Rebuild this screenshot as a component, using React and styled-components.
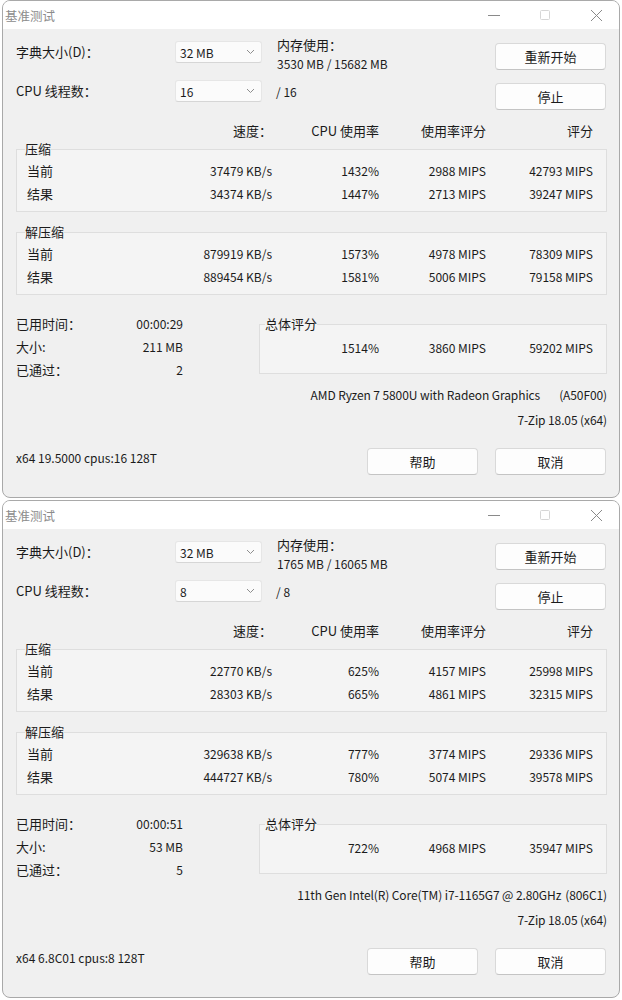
import React from "react";
import styled, { createGlobalStyle } from "styled-components";

const Global = createGlobalStyle`
  html, body { margin: 0; padding: 0; background: #ffffff; }
  body {
    font-family: "Noto Sans CJK SC", "Noto Sans", sans-serif;
    color: #1b1b1b;
    -webkit-font-smoothing: antialiased;
  }
`;

const Page = styled.div`
  display: flex;
  flex-direction: column;
  gap: 2px;
  padding-left: 2px;
`;

const Window = styled.section`
  width: 618px;
  height: 498px;
  box-sizing: border-box;
  border: 1px solid #a9a9a9;
  border-radius: 8px;
  overflow: hidden;
  background: #f0f0f0;
  display: flex;
  flex-direction: column;
`;

const TitleBar = styled.header`
  height: 28px;
  flex: none;
  background: #ffffff;
  display: flex;
  align-items: center;
  padding-left: 2px;
`;

const Title = styled.span`
  font-size: 12.5px;
  color: #8c8c8c;
`;

const Controls = styled.div`
  margin-left: auto;
  display: flex;
  gap: 5px;
  height: 100%;
`;

const Control = styled.div`
  width: 46px;
  height: 100%;
  display: flex;
  align-items: center;
  justify-content: center;
`;

const Body = styled.div`
  padding: 12px 12px 0 13px;
  font-size: 12px;
`;

const TopGrid = styled.div`
  display: grid;
  grid-template-columns: 159px 87px 1fr 111px;
  grid-template-rows: 39px 30px;
  align-items: start;
  padding-right: 1px;
`;

const Label = styled.div`
  font-size: 13px;
  line-height: 22px;
  white-space: nowrap;
`;

const Select = styled.div`
  height: 22px;
  box-sizing: border-box;
  background: #fbfbfb;
  border: 1px solid #e6e6e6;
  border-bottom-color: #d6d6d6;
  border-radius: 3px;
  display: flex;
  align-items: center;
  justify-content: space-between;
  padding: 0 6px 0 4px;
  font-size: 12px;
`;

const Memory = styled.div`
  margin-top: -6px;
  padding-left: 15px;
  line-height: 19px;
  font-size: 12px;
  white-space: nowrap;
  & > div:first-child { font-size: 13px; }
`;

const Threads = styled.div`
  padding-left: 14px;
  margin-top: 1px;
  line-height: 22px;
  font-size: 12px;
`;

const Button = styled.div`
  height: 27px;
  box-sizing: border-box;
  width: 111px;
  margin-top: ${(p) => p.$top || 0}px;
  background: #fdfdfd;
  border: 1px solid #d9d9d9;
  border-bottom-color: #c4c4c4;
  border-radius: 4px;
  display: flex;
  align-items: center;
  justify-content: center;
  font-size: 13px;
  color: #1b1b1b;
`;

const ColGrid = styled.div`
  display: grid;
  grid-template-columns: 1fr 107px 107px 107px 107px;
  text-align: right;
  white-space: nowrap;
  & > :first-child { text-align: left; }
`;

const HeaderRow = styled(ColGrid)`
  margin-top: 11px;
  padding: 0 14px 0 11px;
  line-height: 20px;
  font-size: 13px;
`;

const Group = styled.fieldset`
  margin: ${(p) => p.$top || 0}px 0 0 0;
  padding: 2px 13px 6px 10px;
  border: 1px solid #dedede;
  background: #f4f4f4;
  min-width: 0;
`;

const Legend = styled.legend`
  padding: 0;
  margin-left: -2px;
  line-height: 16px;
  font-size: 13px;
`;

const DataRow = styled(ColGrid)`
  line-height: 23px;
  font-size: 12px;
  & > :first-child { font-size: 13px; }
`;

const BottomGrid = styled.div`
  margin-top: 17px;
  display: grid;
  grid-template-columns: 167px 76px 1fr;
  align-items: start;
`;

const Stats = styled.div`
  display: grid;
  grid-template-columns: 1fr auto;
  line-height: 23px;
  font-size: 12px;
  & > :nth-child(odd) { font-size: 13px; }
  & > :nth-child(even) { text-align: right; }
`;

const TotalGroup = styled.fieldset`
  grid-column: 3;
  margin: 4px 0 0 0;
  padding: 4px 13px 14px 7px;
  border: 1px solid #dedede;
  background: #f4f4f4;
  min-width: 0;
`;

const TotalRow = styled.div`
  display: grid;
  grid-template-columns: 1fr 107px 107px 107px;
  text-align: right;
  line-height: 23px;
  font-size: 12px;
  white-space: nowrap;
`;

const InfoLine = styled.div`
  margin-top: 2px;
  display: flex;
  justify-content: flex-end;
  gap: ${(p) => p.$gap || 0}px;
  line-height: 23px;
  font-size: 12px;
  white-space: nowrap;
  letter-spacing: -0.1px;
`;

const Footer = styled.div`
  margin-top: 17px;
  display: flex;
  align-items: flex-start;
`;

const FooterText = styled.div`
  line-height: 20px;
  font-size: 12px;
`;

const FooterButtons = styled.div`
  margin-left: auto;
  margin-right: 1px;
  display: flex;
  gap: 17px;
`;

const Chevron = () => (
  <svg width="9" height="6" viewBox="0 0 9 6">
    <path d="M1 1 L4.5 4.5 L8 1" fill="none" stroke="#8e8e8e" strokeWidth="1" />
  </svg>
);

const MinIcon = () => (
  <svg width="14" height="14" viewBox="0 0 14 14">
    <path d="M1 7.5 H13" stroke="#8a8a8a" strokeWidth="1" />
  </svg>
);

const MaxIcon = () => (
  <svg width="12" height="12" viewBox="0 0 12 12">
    <rect x="1.5" y="1.5" width="9" height="9" rx="1" fill="none" stroke="#d6d6d6" strokeWidth="1" />
  </svg>
);

const CloseIcon = () => (
  <svg width="13" height="13" viewBox="0 0 13 13">
    <path d="M1 1 L12 12 M12 1 L1 12" stroke="#8a8a8a" strokeWidth="1" />
  </svg>
);

const windows = [
  {
    threads: "16",
    maxThreads: "/ 16",
    memory: "3530 MB / 15682 MB",
    comp: [
      ["当前", "37479 KB/s", "1432%", "2988 MIPS", "42793 MIPS"],
      ["结果", "34374 KB/s", "1447%", "2713 MIPS", "39247 MIPS"],
    ],
    decomp: [
      ["当前", "879919 KB/s", "1573%", "4978 MIPS", "78309 MIPS"],
      ["结果", "889454 KB/s", "1581%", "5006 MIPS", "79158 MIPS"],
    ],
    elapsed: "00:00:29",
    size: "211 MB",
    passes: "2",
    total: ["1514%", "3860 MIPS", "59202 MIPS"],
    cpu: "AMD Ryzen 7 5800U with Radeon Graphics",
    cpuId: "(A50F00)",
    cpuGap: 19,
    footer: "x64 19.5000 cpus:16 128T",
  },
  {
    threads: "8",
    maxThreads: "/ 8",
    memory: "1765 MB / 16065 MB",
    comp: [
      ["当前", "22770 KB/s", "625%", "4157 MIPS", "25998 MIPS"],
      ["结果", "28303 KB/s", "665%", "4861 MIPS", "32315 MIPS"],
    ],
    decomp: [
      ["当前", "329638 KB/s", "777%", "3774 MIPS", "29336 MIPS"],
      ["结果", "444727 KB/s", "780%", "5074 MIPS", "39578 MIPS"],
    ],
    elapsed: "00:00:51",
    size: "53 MB",
    passes: "5",
    total: ["722%", "4968 MIPS", "35947 MIPS"],
    cpu: "11th Gen Intel(R) Core(TM) i7-1165G7 @ 2.80GHz",
    cpuId: "(806C1)",
    cpuGap: 4,
    footer: "x64 6.8C01 cpus:8 128T",
  },
];

const Row = ({ cells }) => (
  <DataRow>
    {cells.map((c, i) => (
      <span key={i}>{c}</span>
    ))}
  </DataRow>
);

const BenchWindow = ({ d }) => (
  <Window>
    <TitleBar>
      <Title>基准测试</Title>
      <Controls>
        <Control><MinIcon /></Control>
        <Control><MaxIcon /></Control>
        <Control><CloseIcon /></Control>
      </Controls>
    </TitleBar>
    <Body>
      <TopGrid>
        <Label>字典大小(D)：</Label>
        <Select>
          <span>32 MB</span>
          <Chevron />
        </Select>
        <Memory>
          <div>内存使用：</div>
          <div>{d.memory}</div>
        </Memory>
        <Button $top={2}>重新开始</Button>
        <Label>CPU 线程数：</Label>
        <Select>
          <span>{d.threads}</span>
          <Chevron />
        </Select>
        <Threads>{d.maxThreads}</Threads>
        <Button $top={3}>停止</Button>
      </TopGrid>

      <HeaderRow>
        <span />
        <span>速度：</span>
        <span>CPU 使用率</span>
        <span>使用率评分</span>
        <span>评分</span>
      </HeaderRow>

      <Group>
        <Legend>压缩</Legend>
        {d.comp.map((r, i) => (
          <Row key={i} cells={r} />
        ))}
      </Group>

      <Group $top={12}>
        <Legend>解压缩</Legend>
        {d.decomp.map((r, i) => (
          <Row key={i} cells={r} />
        ))}
      </Group>

      <BottomGrid>
        <Stats>
          <span>已用时间：</span>
          <span>{d.elapsed}</span>
          <span>大小:</span>
          <span>{d.size}</span>
          <span>已通过：</span>
          <span>{d.passes}</span>
        </Stats>
        <TotalGroup>
          <Legend>总体评分</Legend>
          <TotalRow>
            <span />
            {d.total.map((t, i) => (
              <span key={i}>{t}</span>
            ))}
          </TotalRow>
        </TotalGroup>
      </BottomGrid>

      <InfoLine $gap={d.cpuGap}>
        <span>{d.cpu}</span>
        <span>{d.cpuId}</span>
      </InfoLine>
      <InfoLine>
        <span>7-Zip 18.05 (x64)</span>
      </InfoLine>

      <Footer>
        <FooterText>{d.footer}</FooterText>
        <FooterButtons>
          <Button>帮助</Button>
          <Button>取消</Button>
        </FooterButtons>
      </Footer>
    </Body>
  </Window>
);

export default function App() {
  return (
    <>
      <Global />
      <Page>
        {windows.map((d, i) => (
          <BenchWindow key={i} d={d} />
        ))}
      </Page>
    </>
  );
}
